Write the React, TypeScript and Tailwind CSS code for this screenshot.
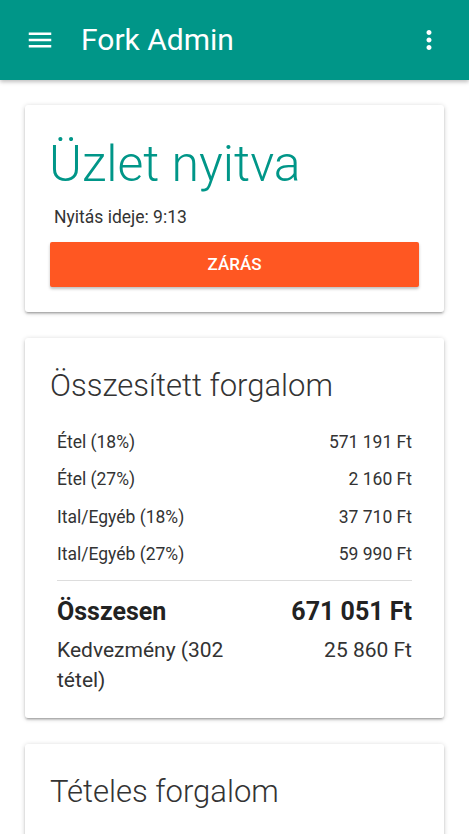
import React from "react";

const rows = [
  { label: "Étel (18%)", value: "571 191 Ft" },
  { label: "Étel (27%)", value: "2 160 Ft" },
  { label: "Ital/Egyéb (18%)", value: "37 710 Ft" },
  { label: "Ital/Egyéb (27%)", value: "59 990 Ft" },
];

const MenuIcon = () => (
  <svg viewBox="0 0 24 24" className="w-[30px] h-[30px]" fill="currentColor">
    <path d="M3 18h18v-2H3v2zm0-5h18v-2H3v2zm0-7v2h18V6H3z" />
  </svg>
);

const MoreIcon = () => (
  <svg viewBox="0 0 24 24" className="w-[30px] h-[30px]" fill="currentColor">
    <path d="M12 8c1.1 0 2-.9 2-2s-.9-2-2-2-2 .9-2 2 .9 2 2 2zm0 2c-1.1 0-2 .9-2 2s.9 2 2 2 2-.9 2-2-.9-2-2-2zm0 6c-1.1 0-2 .9-2 2s.9 2 2 2 2-.9 2-2-.9-2-2-2z" />
  </svg>
);

const Card = ({ children, className = "" }: { children: React.ReactNode; className?: string }) => (
  <div className={`bg-white rounded-[3px] shadow-[0_2px_2px_0_rgba(0,0,0,0.14),0_3px_1px_-2px_rgba(0,0,0,0.12),0_1px_5px_0_rgba(0,0,0,0.2)] ${className}`}>
    {children}
  </div>
);

export default function App() {
  return (
    <div className="h-[834px] overflow-hidden bg-white font-['Roboto',sans-serif] text-[#212121]">
      {/* Toolbar */}
      <header className="h-[80px] bg-[#009688] text-white flex items-center pl-[25px] pr-[25px] shadow-[0_2px_4px_rgba(0,0,0,0.25)] relative z-10">
        <MenuIcon />
        <h1 className="ml-[26px] text-[30px] leading-none font-normal flex-1">Fork Admin</h1>
        <MoreIcon />
      </header>

      <main className="px-[25px] pt-[25px] flex flex-col gap-[26px]">
        {/* Nyitás */}
        <Card className="px-[25px] pt-[29px] pb-[25px]">
          <h2 className="text-[50px] leading-[61px] font-light text-[#009688] -ml-[1px]">Üzlet nyitva</h2>
          <p className="mt-[10px] ml-[4px] text-[17.5px] leading-6 text-[#333]">Nyitás ideje: 9:13</p>
          <button className="mt-[13px] w-full h-[45px] bg-[#ff5722] text-white text-[17px] font-medium rounded-[2px] shadow-[0_2px_3px_rgba(0,0,0,0.25)]">
            ZÁRÁS
          </button>
        </Card>

        {/* Összesített */}
        <Card className="px-[25px] pt-[24px] pb-[23px]">
          <h2 className="text-[31px] leading-[48px] font-light text-[#333]">Összesített forgalom</h2>
          <div className="mt-[13px] px-[7px]">
            {rows.map((r) => (
              <div key={r.label} className="h-[37.5px] flex items-center justify-between text-[17.5px] text-[#333]">
                <span>{r.label}</span>
                <span>{r.value}</span>
              </div>
            ))}
            <div className="mt-[7px] border-t border-[#ddd]" />
            <div className="mt-[13px] flex justify-between text-[25px] leading-[36px] font-bold text-[#222]">
              <span>Összesen</span>
              <span>671 051 Ft</span>
            </div>
            <div className="mt-[5px] flex justify-between text-[21px] leading-[30px] text-[#333]">
              <span className="w-[200px]">Kedvezmény (302 tétel)</span>
              <span>25 860 Ft</span>
            </div>
          </div>
        </Card>

        {/* Tételes */}
        <Card className="px-[25px] pt-[24px] pb-[40px]">
          <h2 className="text-[31px] leading-[48px] font-light text-[#333]">Tételes forgalom</h2>
        </Card>
      </main>
    </div>
  );
}
